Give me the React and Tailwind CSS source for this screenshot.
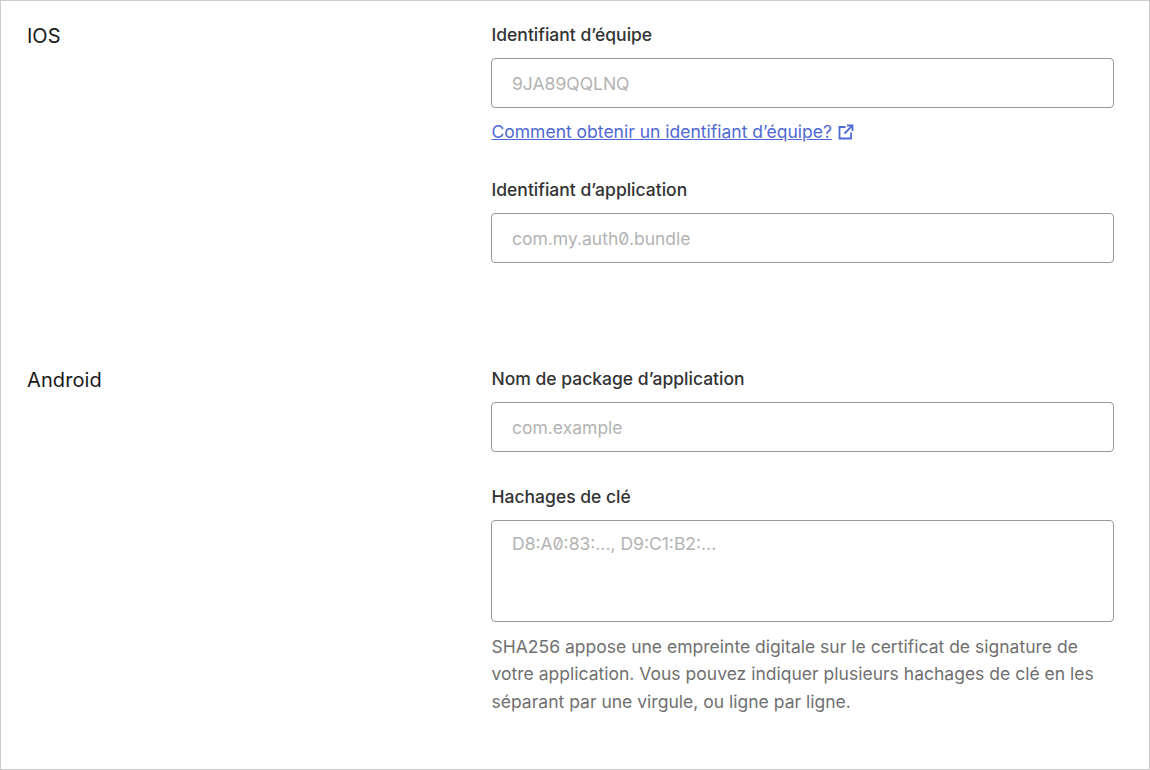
import React from "react";

const inputCls = "block w-full h-[50px] rounded-[4px] border border-[#999999] bg-white px-5 text-[17.5px] text-[#333] outline-none placeholder:text-[#b3b3b3] [font-feature-settings:'zero']";
const labelCls = "block text-[17.5px] leading-[24px] font-medium text-[#333333] mb-[11px] pl-[0.5px]";

function ExternalIcon() {
  return (
    <svg width="16" height="16" viewBox="0 0 16 16" fill="none" stroke="currentColor" strokeWidth="1.8" className="inline-block ml-[6px] align-[-2px]">
      <path d="M7.5 3H1.5v11.5H13V8.5" />
      <path d="M9 1.5h5.5V7M14.3 1.7 6.5 9.5" />
    </svg>
  );
}

export default function App() {
  return (
    <div className="h-[770px] w-[1150px] overflow-hidden border border-[#cccccc] bg-white font-['Inter',sans-serif]">
      <section className="flex pl-[26px] pt-[22px] h-[357px]">
        <h2 className="w-[464px] shrink-0 text-[20px] leading-[26px] font-normal text-[#191919]">IOS</h2>
        <div className="w-[623px]">
          <label className={labelCls}>Identifiant d’équipe</label>
          <input className={inputCls} placeholder="9JA89QQLNQ" />
          <a className="block mt-[11px] pl-[0.5px] text-[17.5px] leading-[26px] text-[#4f69d2]" href="#">
            <span className="underline">Comment obtenir un identifiant d’équipe?</span>
            <ExternalIcon />
          </a>
          <label className={labelCls + " mt-[33px]"}>Identifiant d’application</label>
          <input className={inputCls} placeholder="com.my.auth0.bundle" />
        </div>
      </section>
      <section className="flex pl-[26px] pt-[9px]">
        <h2 className="w-[464px] shrink-0 text-[20px] leading-[26px] font-normal text-[#191919] tracking-[0.1px]">Android</h2>
        <div className="w-[623px]">
          <label className={labelCls}>Nom de package d’application</label>
          <input className={inputCls} placeholder="com.example" />
          <label className={labelCls + " mt-[33px]"}>Hachages de clé</label>
          <textarea className="block w-full h-[102px] resize-none rounded-[4px] border border-[#999999] bg-white px-5 py-[10px] text-[17.5px] leading-[26px] text-[#333] outline-none placeholder:text-[#b3b3b3] [font-feature-settings:'zero']" placeholder="D8:A0:83:..., D9:C1:B2:..." />
          <p className="mt-[10.5px] pl-[0.5px] text-[17.5px] leading-[27.5px] text-[#707070] tracking-[0.01px]">
            SHA256 appose une empreinte digitale sur le certificat de signature de votre application. Vous pouvez indiquer plusieurs hachages de clé en les séparant par une virgule, ou ligne par ligne.
          </p>
        </div>
      </section>
    </div>
  );
}
